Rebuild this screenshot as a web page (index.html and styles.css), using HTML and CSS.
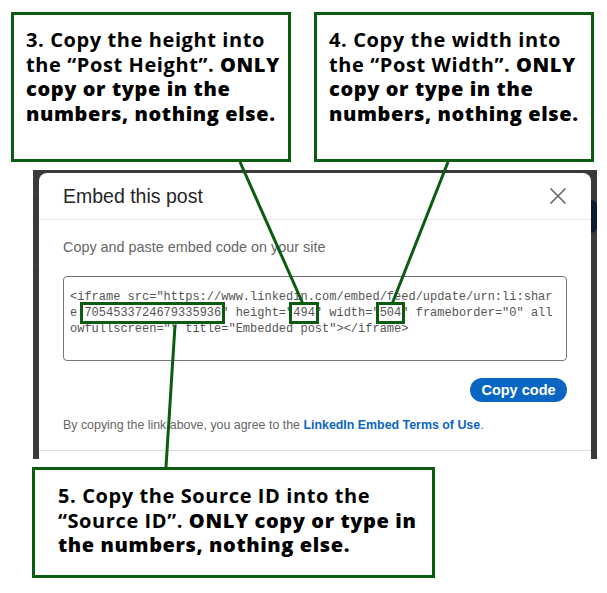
FILE: index.html
```html
<!DOCTYPE html>
<html lang="en">
<head>
    <meta charset="UTF-8">
    <meta name="viewport" content="width=device-width, initial-scale=1.0">
    <title>Embed this post - steps</title>
    <link rel="stylesheet" href="styles.css">
</head>
<body>
    <div class="page">
        <div class="callouts-top">
            <div class="callout">
                <p><span class="lead">3. Copy the height into<br>the “Post Height”.</span> <span class="strong">ONLY<br>copy or type in the<br>numbers, nothing else.</span></p>
            </div>
            <div class="callout">
                <p><span class="lead">4. Copy the width into<br>the “Post Width”.</span> <span class="strong">ONLY<br>copy or type in the<br>numbers, nothing else.</span></p>
            </div>
        </div>

        <div class="shot">
            <div class="gutter gutter-left"></div>
            <div class="modal">
                <div class="modal-header">
                    <h2>Embed this post</h2>
                    <button class="close" aria-label="Dismiss">
                        <svg width="24" height="24" viewBox="0 0 24 24"><path d="M4.5 4.5 L19.5 19.5 M19.5 4.5 L4.5 19.5" stroke="#666" stroke-width="1.6" fill="none"/></svg>
                    </button>
                </div>
                <div class="modal-body">
                    <p class="hint">Copy and paste embed code on your site</p>
                    <div class="code-box">
                        <div class="code">&lt;iframe src="https://www.linkedin.com/embed/feed/update/urn:li:shar
e:<span class="mark">7054533724679335936</span>" height="<span class="mark">494</span>" width="<span class="mark">504</span>" frameborder="0" all
owfullscreen="" title="Embedded post"&gt;&lt;/iframe&gt;</div>
                    </div>
                    <div class="actions">
                        <button class="copy-btn">Copy code</button>
                    </div>
                    <p class="terms">By copying the link above, you agree to the <a href="#">LinkedIn Embed Terms of Use</a>.</p>
                </div>
                <div class="modal-footer"></div>
            </div>
            <div class="gutter gutter-right"><div class="blob"></div></div>
        </div>

        <div class="callout callout-wide">
            <p><span class="lead">5. Copy the Source ID into the<br>“Source ID”.</span> <span class="strong">ONLY copy or type in<br>the numbers, nothing else.</span></p>
        </div>

        <!-- pointer lines -->
        <svg class="pointers" width="607" height="593" viewBox="0 0 607 593">
            <line x1="240" y1="162" x2="303" y2="304"/>
            <line x1="448" y1="162" x2="392" y2="304"/>
            <line x1="166" y1="467" x2="175" y2="325"/>
        </svg>
    </div>
</body>
</html>
```

FILE: styles.css
```css
body {
    margin: 0;
    background: #fff;
    font-family: "Liberation Sans", Arial, sans-serif;
}
.page {
    position: relative;
    width: 607px;
    height: 593px;
    padding-top: 12px;
    box-sizing: border-box;
}
.callouts-top {
    display: flex;
    gap: 23px;
    padding-left: 11px;
}
.callout {
    width: 280px;
    height: 150px;
    box-sizing: border-box;
    border: 3px solid #0b5c10;
    background: #fff;
    padding: 13px 0 0 12px;
}
.callout p {
    margin: 0;
    font-family: "Open Sans", sans-serif;
    font-size: 20px;
    letter-spacing: 0.6px;
    line-height: 24.5px;
    white-space: nowrap;
    color: #000;
}
.lead {
    font-weight: 700;
}
.strong {
    font-weight: 800;
}
.callout-wide {
    width: 403px;
    height: 111px;
    margin: 8px 0 0 32px;
    padding: 14px 0 0 23px;
}

/* screenshot */
.shot {
    display: flex;
    width: 564px;
    height: 289px;
    margin: 8px 0 0 33px;
    padding-top: 3px;
    box-sizing: border-box;
    background: #3a3a3a;
}
.gutter {
    width: 6px;
}
.gutter-left {
    background: linear-gradient(#3a3a3a 20px, #444 20px, #444 21px, #3a3a3a 21px, #3a3a3a 92px, #444 92px, #444 93px, #3a3a3a 93px);
}
.blob {
    height: 33px;
    margin-top: 27px;
    background: #0d1b2e;
    border-radius: 0 10px 10px 0;
}
.modal {
    flex: 1;
    display: flex;
    flex-direction: column;
    background: #fff;
    border-radius: 8px 8px 0 0;
    overflow: hidden;
}
.modal-header {
    display: flex;
    align-items: center;
    justify-content: space-between;
    height: 46px;
    padding: 0 21px 0 24px;
    border-bottom: 1px solid #e6e6e6;
}
.modal-header h2 {
    margin: 0;
    font-size: 19.5px;
    font-weight: 400;
    color: #262626;
}
.close {
    display: flex;
    padding: 0;
    border: none;
    background: none;
}
.modal-body {
    padding: 0 24px;
}
.hint {
    margin: 17px 0 0;
    font-size: 14.4px;
    line-height: 20px;
    color: #666;
}
.code-box {
    height: 85px;
    margin-top: 19px;
    box-sizing: border-box;
    border: 1px solid #777;
    border-radius: 4px;
    padding: 12px 6px 0;
}
.code {
    white-space: pre;
    font-family: "Liberation Mono", "Courier New", monospace;
    font-size: 12px;
    line-height: 16px;
    color: #555;
}
.mark {
    outline: 3px solid #0b5c10;
    outline-offset: 1px;
}
.actions {
    display: flex;
    justify-content: flex-end;
    margin-top: 17px;
}
.copy-btn {
    width: 97px;
    height: 24px;
    padding: 0;
    border: none;
    border-radius: 12px;
    background: #0a66c2;
    color: #fff;
    font-family: "Liberation Sans", Arial, sans-serif;
    font-size: 14.5px;
    font-weight: 700;
}
.terms {
    margin: 15px 0 0;
    font-size: 12.4px;
    line-height: 16px;
    color: #666;
}
.terms a {
    color: #0a66c2;
    font-weight: 700;
    text-decoration: none;
}
.modal-footer {
    margin-top: 17px;
    border-top: 1px solid #ddd;
    flex: 1;
}
.pointers {
    position: absolute;
    top: 0;
    left: 0;
    pointer-events: none;
}
.pointers line {
    stroke: #0b5c10;
    stroke-width: 3;
}
```
